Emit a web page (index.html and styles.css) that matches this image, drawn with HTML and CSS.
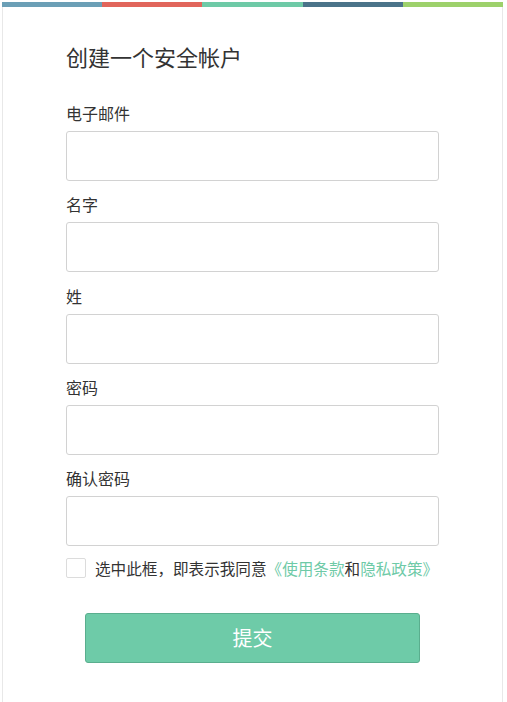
FILE: index.html
```html
<!DOCTYPE html>
<html lang="zh">
<head>
<meta charset="utf-8">
<link rel="stylesheet" href="styles.css">
</head>
<body>
<div class="card">
  <div class="stripe">
    <span class="s1"></span><span class="s2"></span><span class="s3"></span><span class="s4"></span><span class="s5"></span>
  </div>
  <form class="body">
    <h1 class="title">创建一个安全帐户</h1>
    <div class="field">
      <label class="label">电子邮件</label>
      <input class="input" type="text">
    </div>
    <div class="field">
      <label class="label">名字</label>
      <input class="input" type="text">
    </div>
    <div class="field">
      <label class="label">姓</label>
      <input class="input" type="text">
    </div>
    <div class="field">
      <label class="label">密码</label>
      <input class="input" type="password">
    </div>
    <div class="field">
      <label class="label">确认密码</label>
      <input class="input" type="password">
    </div>
    <div class="agree">
      <span class="check"></span>
      <span class="agree-text">选中此框，即表示我同意<a class="link">《使用条款</a>和<a class="link">隐私政策》</a></span>
    </div>
    <button class="submit" type="button">提交</button>
  </form>
</div>
</body>
</html>
```
FILE: styles.css
```css
* { box-sizing: border-box; }
html, body { margin: 0; padding: 0; background: #fff; }
body {
  font-family: "Noto Sans CJK SC", "Noto Sans", "Liberation Sans", sans-serif;
  color: #333;
}
.card {
  margin: 2px 0 0 2px;
  width: 501px;
}
.stripe {
  display: flex;
  height: 5px;
}
.stripe span { flex: 1; }
.s1 { background: #6b9fb6; }
.s2 { background: #e1655b; }
.s3 { background: #6ecaa7; }
.s4 { background: #4a7389; }
.s5 { background: #9dd16b; }
.body {
  display: flex;
  flex-direction: column;
  border-left: 1px solid #e8e8e8;
  border-right: 1px solid #e8e8e8;
  padding: 34px 63px 60px;
  min-height: 700px;
}
.title {
  margin: 0 0 31px;
  font-size: 22px;
  line-height: 30px;
  font-weight: normal;
  color: #333;
}
.field {
  display: flex;
  flex-direction: column;
  margin-bottom: 12.25px;
}
.label {
  font-size: 16px;
  line-height: 22px;
  margin-bottom: 7px;
  color: #333;
}
.input {
  height: 50px;
  width: 100%;
  border: 1px solid #d2d2d2;
  border-radius: 3px;
  background: #fff;
  margin: 0;
}
.agree {
  display: flex;
  align-items: center;
  margin-top: 0;
  height: 20px;
}
.check {
  width: 20px;
  height: 20px;
  border: 1px solid #dcdcdc;
  border-radius: 2px;
  background: #fff;
  margin-right: 9px;
  flex: none;
}
.agree-text {
  font-size: 15.6px;
  line-height: 20px;
  color: #333;
  white-space: nowrap;
}
.link { color: #6ecaa7; }
.submit {
  margin: 35px auto 0;
  width: 335px;
  height: 50px;
  background: #6ecba8;
  border: 1px solid #5aae8e;
  border-radius: 3px;
  color: #fff;
  font-family: inherit;
  font-size: 20px;
  line-height: 1;
  padding: 0;
}
```
